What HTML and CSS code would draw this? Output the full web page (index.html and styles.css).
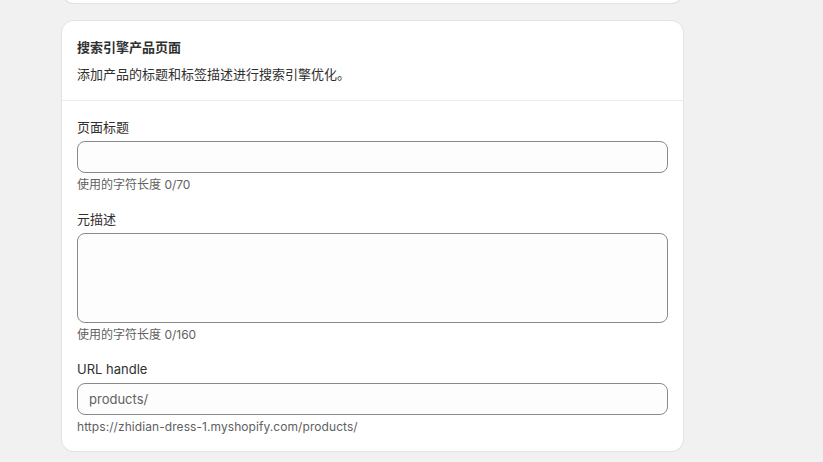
FILE: index.html
```html
<!DOCTYPE html>
<html lang="zh-CN">
<head>
<meta charset="utf-8">
<title>搜索引擎产品页面</title>
<link rel="stylesheet" href="styles.css">
</head>
<body>
<div class="page">
  <div class="card card-prev"></div>
  <section class="card">
    <div class="card-header">
      <h2 class="card-title">搜索引擎产品页面</h2>
      <p class="card-desc">添加产品的标题和标签描述进行搜索引擎优化。</p>
    </div>
    <div class="card-body">
      <div class="field">
        <label class="label">页面标题</label>
        <div class="input"></div>
        <div class="help">使用的字符长度 0/70</div>
      </div>
      <div class="field">
        <label class="label">元描述</label>
        <div class="input textarea"></div>
        <div class="help">使用的字符长度 0/160</div>
      </div>
      <div class="field">
        <label class="label">URL handle</label>
        <div class="input"><span class="prefix">products/</span></div>
        <div class="help help-url">https://zhidian-dress-1.myshopify.com/products/</div>
      </div>
    </div>
  </section>
</div>
</body>
</html>
```

FILE: styles.css
```css
html, body {
  margin: 0;
  padding: 0;
  background: #f1f1f1;
}
body {
  font-family: Inter, "Noto Sans CJK SC", sans-serif;
  font-size: 13px;
  color: #303030;
  height: 462px;
  overflow: hidden;
}
.page {
  width: 621px;
  margin-left: 62px;
  display: flex;
  flex-direction: column;
  gap: 18px;
}
.card {
  background: #fff;
  border-radius: 12px;
  box-shadow: 0 0 0 1px #e4e4e4, 0 1px 1px 0 rgba(0,0,0,0.08);
  box-sizing: border-box;
}
.card-prev {
  height: 40px;
  margin-top: -37px;
}
.card-header {
  padding: 16px 15px 16px;
  border-bottom: 1px solid #ebebeb;
}
.card-title {
  margin: 0;
  font-size: 13px;
  line-height: 20px;
  font-weight: 700;
  color: #303030;
}
.card-desc {
  margin: 7px 0 0;
  line-height: 20px;
  color: #303030;
}
.card-body {
  padding: 16px 15px 16px;
  display: flex;
  flex-direction: column;
  gap: 16px;
}
.field {
  display: flex;
  flex-direction: column;
}
.label {
  line-height: 20px;
  margin-bottom: 4px;
}
.input {
  height: 32px;
  box-sizing: border-box;
  border: 1px solid #8a8a8a;
  border-radius: 8px;
  background: #fdfdfd;
  display: flex;
  align-items: center;
  padding: 0 11px;
}
.textarea {
  height: 90px;
}
.prefix {
  color: #616161;
  font-size: 13px;
}
.help {
  margin-top: 4px;
  line-height: 16px;
  font-size: 12px;
  color: #616161;
}
.help-url {
  letter-spacing: 0.07px;
}
```
